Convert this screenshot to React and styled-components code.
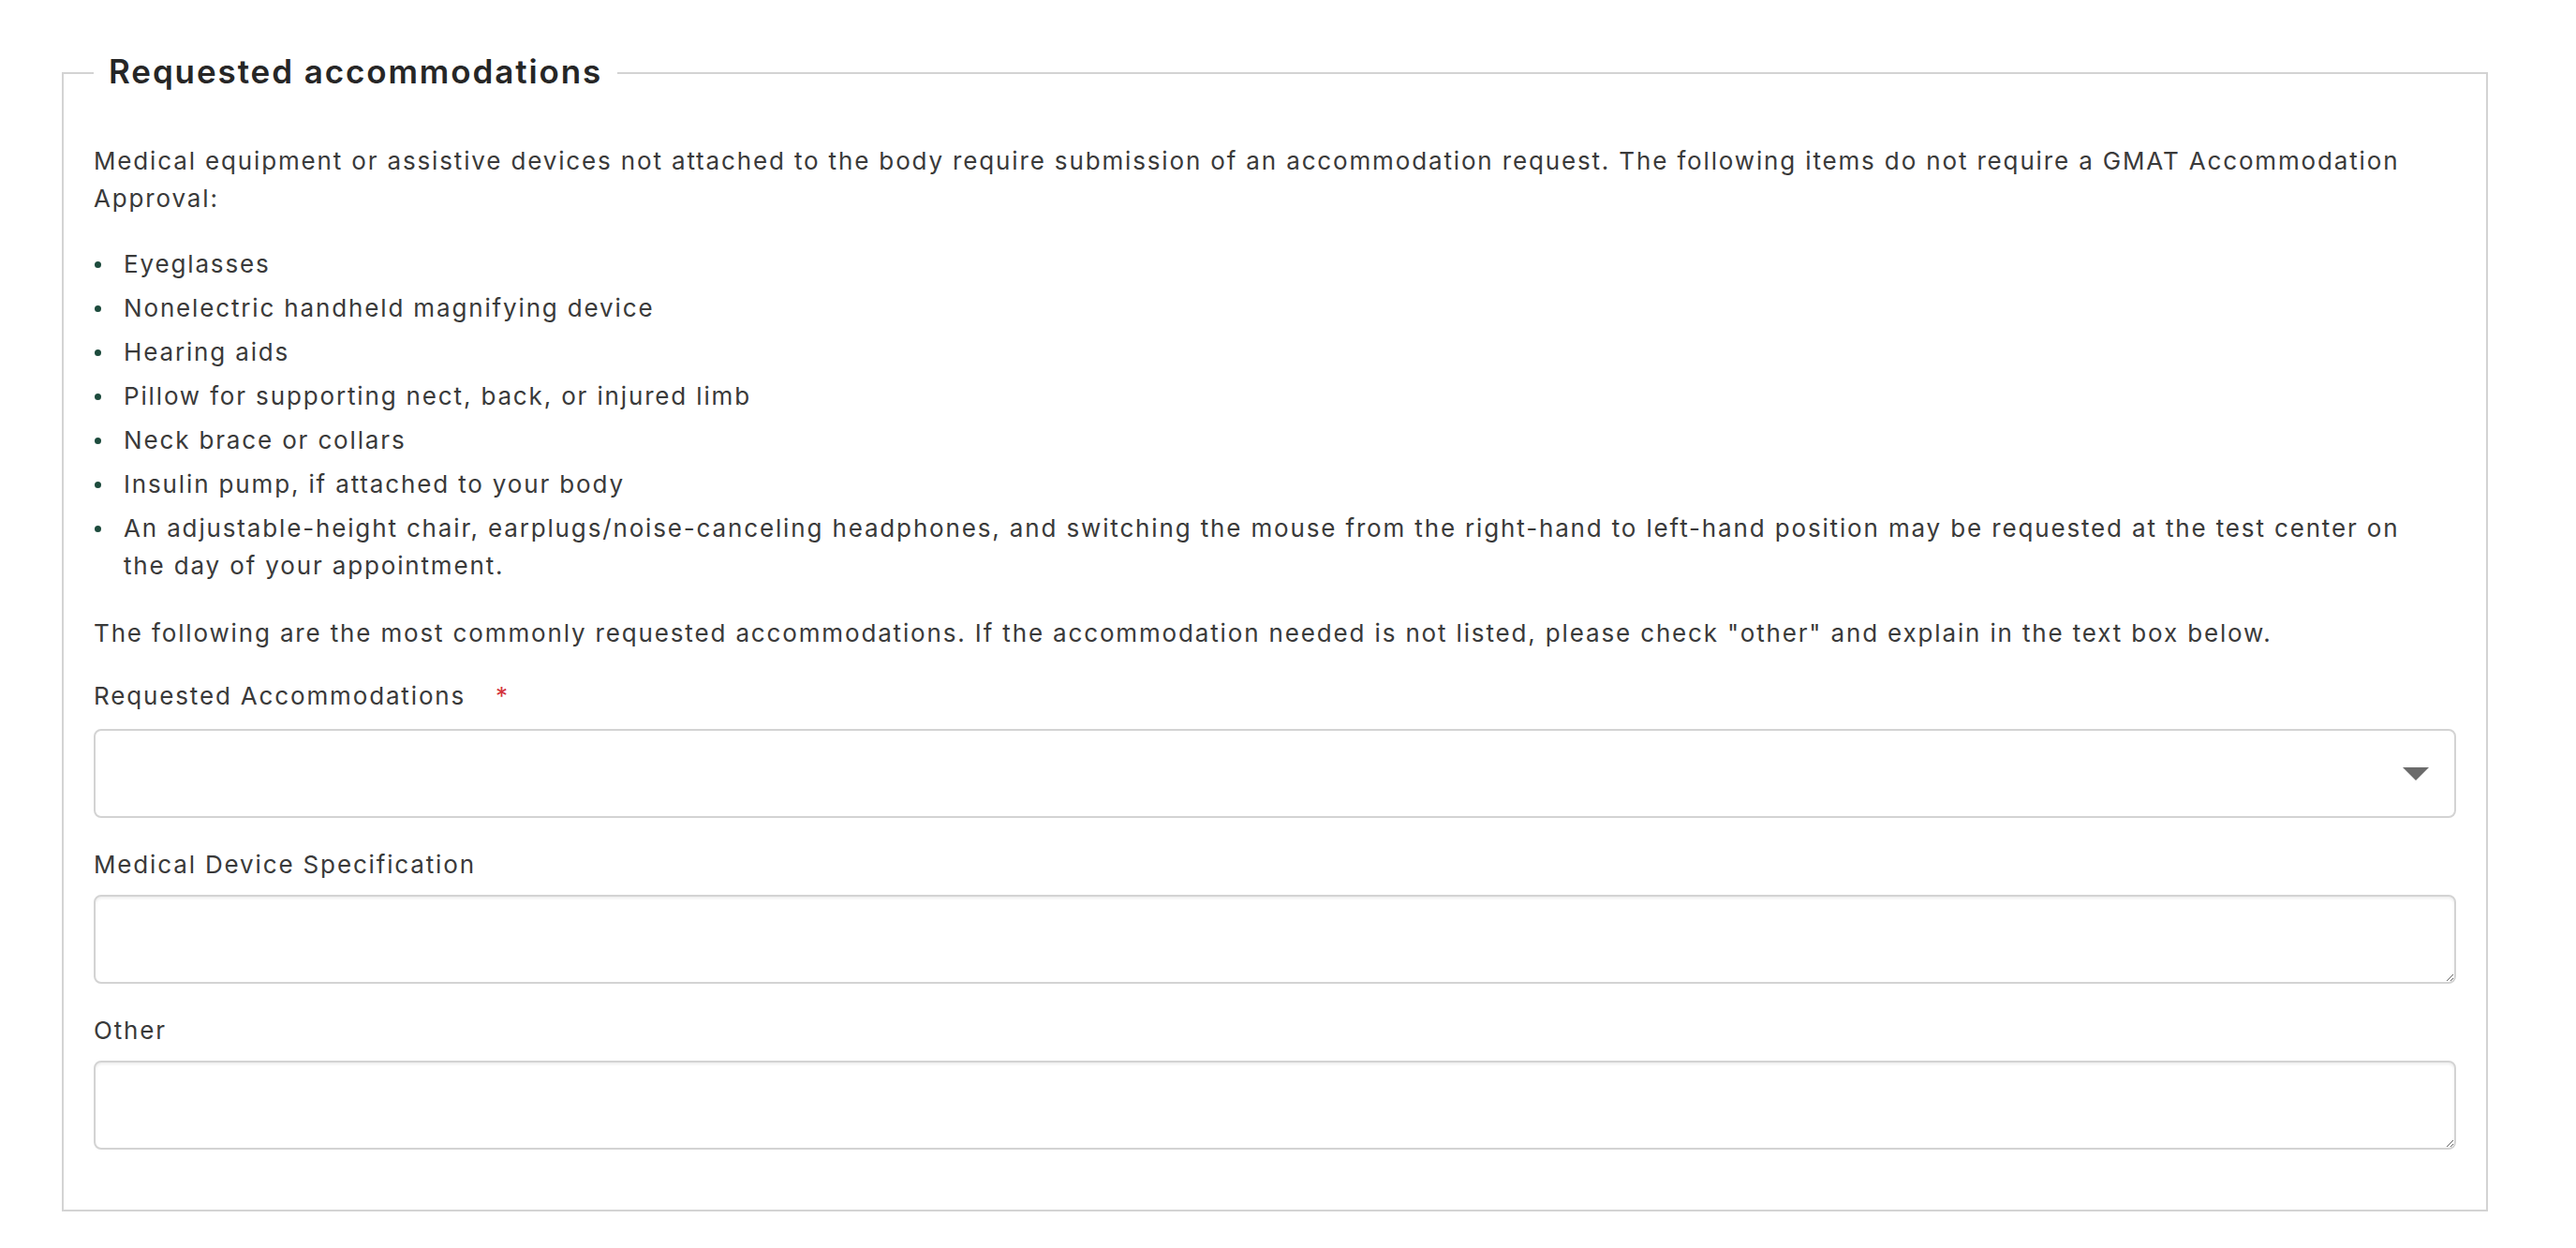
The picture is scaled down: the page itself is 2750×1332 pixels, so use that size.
import React from "react";
import styled, { createGlobalStyle } from "styled-components";

const GlobalStyle = createGlobalStyle`
  html, body {
    margin: 0;
    padding: 0;
    background: #ffffff;
  }
  body {
    font-family: Inter, "Liberation Sans", sans-serif;
    color: #3a3a3a;
  }
`;

const Page = styled.div`
  padding: 55px 94px 0 66px;
`;

const Fieldset = styled.fieldset`
  margin: 0;
  min-width: 0;
  padding: 52px 32px 64px;
  border: 2px solid #d3d3d3;
`;

const Legend = styled.legend`
  padding: 0 16px 3px;
  font-size: 35px;
  font-weight: 600;
  line-height: 42px;
  letter-spacing: 1.9px;
  color: #262626;
`;

const Text = styled.p`
  margin: 0 0 ${(p) => p.$mb}px;
  font-size: 26px;
  line-height: 40px;
  letter-spacing: 1.85px;
`;

const List = styled.ul`
  margin: 0 0 32px;
  padding: 0 30px 0 32px;
  list-style: none;
`;

const Item = styled.li`
  position: relative;
  font-size: 26px;
  line-height: 40px;
  letter-spacing: 1.85px;
  margin-bottom: 7px;

  &::before {
    content: "";
    position: absolute;
    left: -31px;
    top: 17px;
    width: 7px;
    height: 7px;
    border-radius: 50%;
    background: #1d4b3d;
  }
`;

const Field = styled.div`
  margin-bottom: 30px;

  &:last-child {
    margin-bottom: 0;
  }
`;

const Label = styled.label`
  display: block;
  margin-bottom: ${(p) => p.$gap || 12}px;
  font-size: 26px;
  line-height: 40px;
  letter-spacing: 1.85px;
`;

const Required = styled.span`
  margin-left: 32px;
  color: #d3343c;
`;

const SelectWrap = styled.div`
  position: relative;
`;

const Select = styled.select`
  appearance: none;
  display: block;
  width: 100%;
  height: 95px;
  box-sizing: border-box;
  padding: 0 80px 0 20px;
  border: 2px solid #d3d3d3;
  border-radius: 8px;
  background: #ffffff;
  font: inherit;
  font-size: 26px;
  color: #3a3a3a;
  outline: none;
`;

const Caret = styled.svg`
  position: absolute;
  right: 29px;
  top: 50%;
  margin-top: -7px;
  pointer-events: none;
`;

const TextArea = styled.textarea`
  display: block;
  width: 100%;
  height: 95px;
  box-sizing: border-box;
  padding: 12px 20px;
  border: 2px solid #d3d3d3;
  border-radius: 8px;
  box-shadow: inset 0 2px 3px rgba(0, 0, 0, 0.07);
  resize: vertical;
  font: inherit;
  font-size: 26px;
  color: #3a3a3a;
  outline: none;
`;

const items = [
  "Eyeglasses",
  "Nonelectric handheld magnifying device",
  "Hearing aids",
  "Pillow for supporting nect, back, or injured limb",
  "Neck brace or collars",
  "Insulin pump, if attached to your body",
  "An adjustable-height chair, earplugs/noise-canceling headphones, and switching the mouse from the right-hand to left-hand position may be requested at the test center on the day of your appointment.",
];

export default function App() {
  return (
    <Page>
      <GlobalStyle />
      <Fieldset>
        <Legend>Requested accommodations</Legend>
        <Text $mb={30}>
          Medical equipment or assistive devices not attached to the body require submission of an
          accommodation request. The following items do not require a GMAT Accommodation Approval:
        </Text>
        <List>
          {items.map((t) => (
            <Item key={t}>{t}</Item>
          ))}
        </List>
        <Text $mb={27}>
          The following are the most commonly requested accommodations. If the accommodation needed
          is not listed, please check "other" and explain in the text box below.
        </Text>
        <Field>
          <Label htmlFor="acc" $gap={15}>
            Requested Accommodations<Required>*</Required>
          </Label>
          <SelectWrap>
            <Select id="acc" defaultValue="">
              <option value=""></option>
            </Select>
            <Caret width="28" height="14" viewBox="0 0 28 14">
              <path d="M0 0 H28 L14 14 Z" fill="#6b6b6b" />
            </Caret>
          </SelectWrap>
        </Field>
        <Field>
          <Label htmlFor="spec">Medical Device Specification</Label>
          <TextArea id="spec" />
        </Field>
        <Field>
          <Label htmlFor="other">Other</Label>
          <TextArea id="other" />
        </Field>
      </Fieldset>
    </Page>
  );
}
